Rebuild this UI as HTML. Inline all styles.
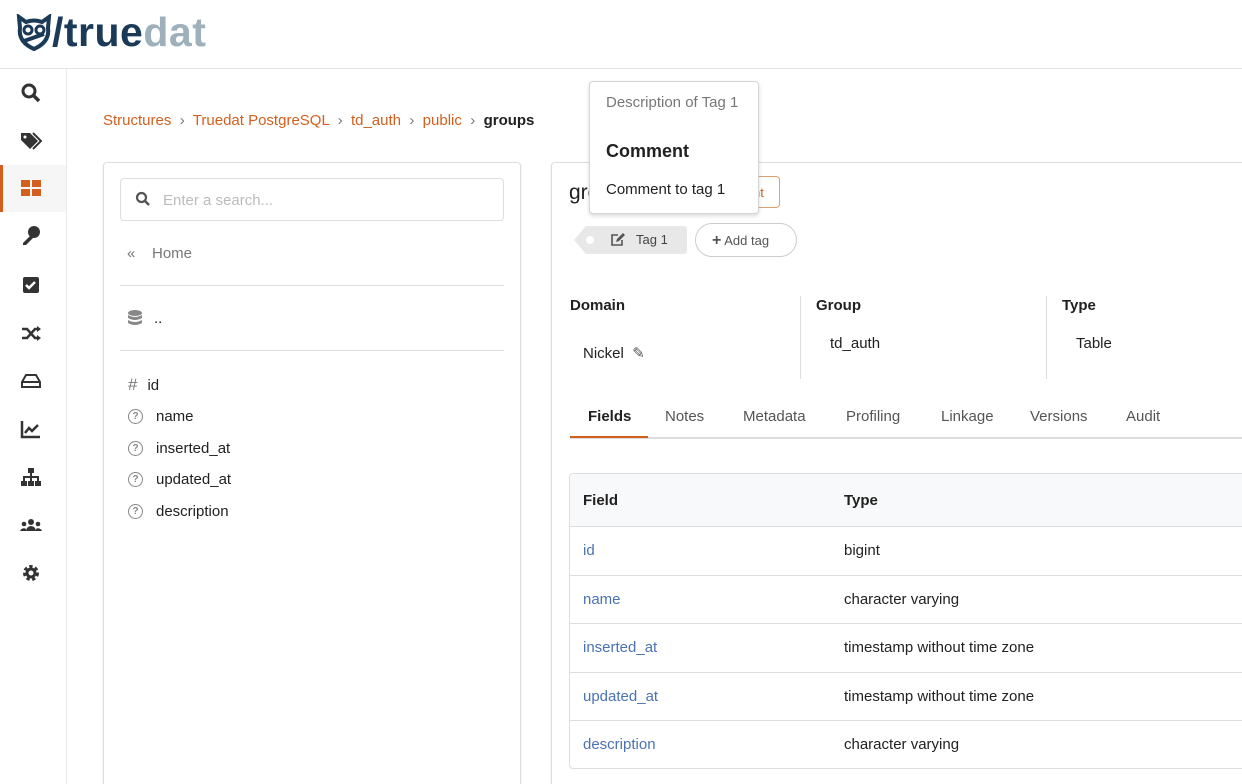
<!DOCTYPE html>
<html><head><meta charset="utf-8"><style>
*{box-sizing:border-box;margin:0;padding:0}
html,body{width:1242px;height:784px;overflow:hidden}
body{background:#fff;font-family:"Liberation Sans",sans-serif;color:#212121;font-size:15px;position:relative}
.a{position:absolute}
.hdr{left:0;top:0;width:1242px;height:69px;border-bottom:1px solid #e3e3e3}
.side{left:0;top:69px;width:67px;height:715px;border-right:1px solid #e8e8e8}
.ic{position:absolute;left:20px;width:22px;height:22px}
.or{color:#d35f1e}
.panel{border:1px solid #ddd;border-radius:4px;box-shadow:0 1px 2px rgba(0,0,0,.1)}
.gr{color:#777}
.lnk{color:#4a73b3}
.row{position:absolute;left:24px;height:20px;display:flex;align-items:center}
.q{display:inline-block;width:15px;height:15px;border:1.3px solid #888;border-radius:50%;font-size:10px;color:#888;text-align:center;line-height:13px;margin-right:13px;font-weight:bold}
</style></head><body>
<div class="a hdr">
 <svg class="a" style="left:16px;top:14px" width="36" height="38" viewBox="0 0 36 38"><path d="M3 3 L10 8 Q18 5 26 8 L33 3 L32 14 Q34 28 18 35 Q2 28 4 14Z" fill="none" stroke="#1b3a57" stroke-width="4"/><circle cx="12" cy="16" r="4" fill="none" stroke="#1b3a57" stroke-width="3"/><circle cx="24" cy="16" r="4" fill="none" stroke="#1b3a57" stroke-width="3"/><path d="M8 27 L28 20" stroke="#1b3a57" stroke-width="4"/></svg>
 <div class="a" style="left:52px;top:9px;font-size:41px;font-weight:bold;letter-spacing:0.5px;color:#1b3a57">/true<span style="color:#9db0bb">dat</span></div>
</div>
<div class="a side">
 <div class="a" style="left:0;top:96px;width:66px;height:47px;background:#f6f6f6;border-left:3px solid #d35f1e"></div>
 <svg class="ic" style="top:13px" viewBox="0 0 22 22"><circle cx="9" cy="9" r="6" fill="none" stroke="#333" stroke-width="3"/><path d="M13 13l6 6" stroke="#333" stroke-width="3.5"/></svg>
 <svg class="ic" style="top:61px" viewBox="0 0 22 22"><path d="M1 3h9l8 8-8 8-9-9z" fill="#333"/><path d="M13 3l8 8-8 8" fill="none" stroke="#333" stroke-width="2"/><circle cx="5" cy="7" r="1.5" fill="#fff"/></svg>
 <svg class="ic" style="top:108px" viewBox="0 0 22 22"><rect x="1" y="3" width="9" height="7" fill="#d35f1e"/><rect x="12" y="3" width="9" height="7" fill="#d35f1e"/><rect x="1" y="12" width="9" height="7" fill="#d35f1e"/><rect x="12" y="12" width="9" height="7" fill="#d35f1e"/></svg>
 <svg class="ic" style="top:156px" viewBox="0 0 22 22"><circle cx="14" cy="7" r="6" fill="#333"/><path d="M10 11L3 18v2h3l7-7" fill="#333"/></svg>
 <svg class="ic" style="top:205px" viewBox="0 0 22 22"><rect x="3" y="3" width="16" height="16" rx="2" fill="#333"/><path d="M6 11l3 3 6-6" fill="none" stroke="#fff" stroke-width="2.5"/></svg>
 <svg class="ic" style="top:253px" viewBox="0 0 22 22"><path d="M2 7h5l8 9h4M2 16h5l8-9h4" fill="none" stroke="#333" stroke-width="2.5"/><path d="M17 4l4 3-4 3zM17 13l4 3-4 3z" fill="#333"/></svg>
 <svg class="ic" style="top:301px" viewBox="0 0 22 22"><path d="M2 12l4-7h10l4 7v5H2z" fill="none" stroke="#333" stroke-width="2"/><path d="M2 12h18" stroke="#333" stroke-width="2"/></svg>
 <svg class="ic" style="top:349px" viewBox="0 0 22 22"><path d="M2 3v16h18" fill="none" stroke="#333" stroke-width="2.5"/><path d="M5 15l4-5 3 3 6-6" fill="none" stroke="#333" stroke-width="2.5"/></svg>
 <svg class="ic" style="top:397px" viewBox="0 0 22 22"><rect x="8" y="2" width="6" height="5" fill="#333"/><rect x="1" y="15" width="6" height="5" fill="#333"/><rect x="8" y="15" width="6" height="5" fill="#333"/><rect x="15" y="15" width="6" height="5" fill="#333"/><path d="M11 7v8M4 15v-4h14v4" fill="none" stroke="#333" stroke-width="2"/></svg>
 <svg class="ic" style="top:445px" viewBox="0 0 22 22"><circle cx="11" cy="8" r="3" fill="#333"/><circle cx="4" cy="10" r="2.3" fill="#333"/><circle cx="18" cy="10" r="2.3" fill="#333"/><path d="M6 17a5 5 0 0110 0zM0 17a4 4 0 016-2v2zM22 17a4 4 0 00-6-2v2z" fill="#333"/></svg>
 <svg class="ic" style="top:493px" viewBox="0 0 22 22"><circle cx="11" cy="11" r="6" fill="none" stroke="#333" stroke-width="4" stroke-dasharray="3 2.3"/><circle cx="11" cy="11" r="5.5" fill="#333"/><circle cx="11" cy="11" r="2.5" fill="#fff"/></svg>
</div>
<div class="a" style="left:103px;top:112px;font-size:15px"><span class="or">Structures</span> <span class="gr">&nbsp;›&nbsp;</span> <span class="or">Truedat PostgreSQL</span> <span class="gr">&nbsp;›&nbsp;</span> <span class="or">td_auth</span> <span class="gr">&nbsp;›&nbsp;</span> <span class="or">public</span> <span class="gr">&nbsp;›&nbsp;</span> <b>groups</b></div>
<div class="a panel" style="left:103px;top:162px;width:418px;height:640px">
 <div class="a" style="left:16px;top:15px;width:384px;height:43px;border:1px solid #ddd;border-radius:4px"></div>
 <svg class="a" style="left:31px;top:28px" width="16" height="16" viewBox="0 0 16 16"><circle cx="6.5" cy="6.5" r="4.5" fill="none" stroke="#555" stroke-width="2.2"/><path d="M10 10l4 4" stroke="#555" stroke-width="2.5"/></svg>
 <div class="a" style="left:59px;top:29px;color:#bbb">Enter a search...</div>
 <div class="a gr" style="left:23px;top:82px">«&nbsp;&nbsp;&nbsp; Home</div>
 <div class="a" style="left:16px;top:122px;width:384px;border-top:1px solid #ddd"></div>
 <svg class="a" style="left:24px;top:147px" width="14" height="16" viewBox="0 0 14 16"><ellipse cx="7" cy="3" rx="7" ry="3" fill="#888"/><path d="M0 5q7 4 14 0v3q-7 4-14 0zM0 10q7 4 14 0v3q-7 4-14 0z" fill="#888"/></svg>
 <div class="a" style="left:50px;top:147px">..</div>
 <div class="a" style="left:16px;top:187px;width:384px;border-top:1px solid #ddd"></div>
 <div class="row" style="top:212px"><span class="gr" style="font-size:17px;margin-right:10px">#</span>id</div>
 <div class="row" style="top:243px"><span class="q">?</span>name</div>
 <div class="row" style="top:275px"><span class="q">?</span>inserted_at</div>
 <div class="row" style="top:306px"><span class="q">?</span>updated_at</div>
 <div class="row" style="top:338px"><span class="q">?</span>description</div>
</div>
<div class="a panel" style="left:551px;top:162px;width:720px;height:640px">
 <div class="a" style="left:17px;top:18px;font-size:21px">groups</div>
 <div class="a or" style="left:150px;top:13px;width:78px;height:32px;border:1px solid #e0a070;border-radius:4px;font-size:13px;padding:8px 0 0 50px">nt</div>
 <div class="a" style="left:22px;top:63px;width:113px;height:28px;background:#e8e8e8;border-radius:0 3px 3px 0;clip-path:polygon(0 50%,12px 0,100% 0,100% 100%,12px 100%)"></div>
 <div class="a" style="left:34px;top:73px;width:8px;height:8px;border-radius:50%;background:#fff"></div>
 <svg class="a" style="left:58px;top:69px" width="16" height="16" viewBox="0 0 16 16"><path d="M12 8v5H2V3h6" fill="none" stroke="#555" stroke-width="1.6"/><path d="M6 10l1-3 6-6 2 2-6 6z" fill="#555"/></svg>
 <div class="a" style="left:84px;top:69px;font-size:13px;color:#444">Tag 1</div>
 <div class="a" style="left:143px;top:60px;width:102px;height:34px;border:1px solid #ccc;border-radius:17px;font-size:13px;color:#555;padding:8px 0 0 16px"><b style="font-size:16px">+</b> Add tag</div>
 <div class="a" style="left:18px;top:134px;font-weight:bold">Domain</div>
 <div class="a" style="left:31px;top:181px">Nickel &nbsp;<span style="color:#555">✎</span></div>
 <div class="a" style="left:248px;top:133px;height:83px;border-left:1px solid #ddd"></div>
 <div class="a" style="left:264px;top:134px;font-weight:bold">Group</div>
 <div class="a" style="left:278px;top:172px">td_auth</div>
 <div class="a" style="left:494px;top:133px;height:83px;border-left:1px solid #ddd"></div>
 <div class="a" style="left:510px;top:134px;font-weight:bold">Type</div>
 <div class="a" style="left:524px;top:172px">Table</div>
 <div class="a" style="left:18px;top:274px;width:702px;border-bottom:2px solid #ddd"></div>
 <div class="a" style="left:18px;top:273px;width:78px;border-bottom:2px solid #d35f1e"></div>
 <div class="a" style="left:36px;top:245px;font-weight:bold">Fields</div>
 <div class="a" style="left:113px;top:245px;color:#555">Notes</div>
 <div class="a" style="left:191px;top:245px;color:#555">Metadata</div>
 <div class="a" style="left:294px;top:245px;color:#555">Profiling</div>
 <div class="a" style="left:389px;top:245px;color:#555">Linkage</div>
 <div class="a" style="left:478px;top:245px;color:#555">Versions</div>
 <div class="a" style="left:574px;top:245px;color:#555">Audit</div>
 <div class="a" style="left:17px;top:310px;width:700px;height:296px;border:1px solid #ddd;border-radius:4px;overflow:hidden">
  <div style="height:53px;background:#f8f9fa;border-bottom:1px solid #ddd;font-weight:bold;position:relative"><span class="a" style="left:13px;top:18px">Field</span><span class="a" style="left:274px;top:18px">Type</span></div>
  <div style="height:48.5px;border-bottom:1px solid #ddd;position:relative"><span class="a lnk" style="left:13px;top:15px">id</span><span class="a" style="left:274px;top:15px">bigint</span></div>
  <div style="height:48.5px;border-bottom:1px solid #ddd;position:relative"><span class="a lnk" style="left:13px;top:15px">name</span><span class="a" style="left:274px;top:15px">character varying</span></div>
  <div style="height:48.5px;border-bottom:1px solid #ddd;position:relative"><span class="a lnk" style="left:13px;top:15px">inserted_at</span><span class="a" style="left:274px;top:15px">timestamp without time zone</span></div>
  <div style="height:48.5px;border-bottom:1px solid #ddd;position:relative"><span class="a lnk" style="left:13px;top:15px">updated_at</span><span class="a" style="left:274px;top:15px">timestamp without time zone</span></div>
  <div style="height:48.5px;position:relative"><span class="a lnk" style="left:13px;top:15px">description</span><span class="a" style="left:274px;top:15px">character varying</span></div>
 </div>
</div>
<div class="a" style="left:589px;top:81px;width:170px;height:133px;background:#fff;border:1px solid #d4d4d5;border-radius:4px;box-shadow:0 2px 4px rgba(0,0,0,.15)">
 <div class="a" style="left:16px;top:12px;color:#777">Description of Tag 1</div>
 <div class="a" style="left:16px;top:59px;font-size:18px;font-weight:bold">Comment</div>
 <div class="a" style="left:16px;top:99px">Comment to tag 1</div>
</div>
</body></html>
